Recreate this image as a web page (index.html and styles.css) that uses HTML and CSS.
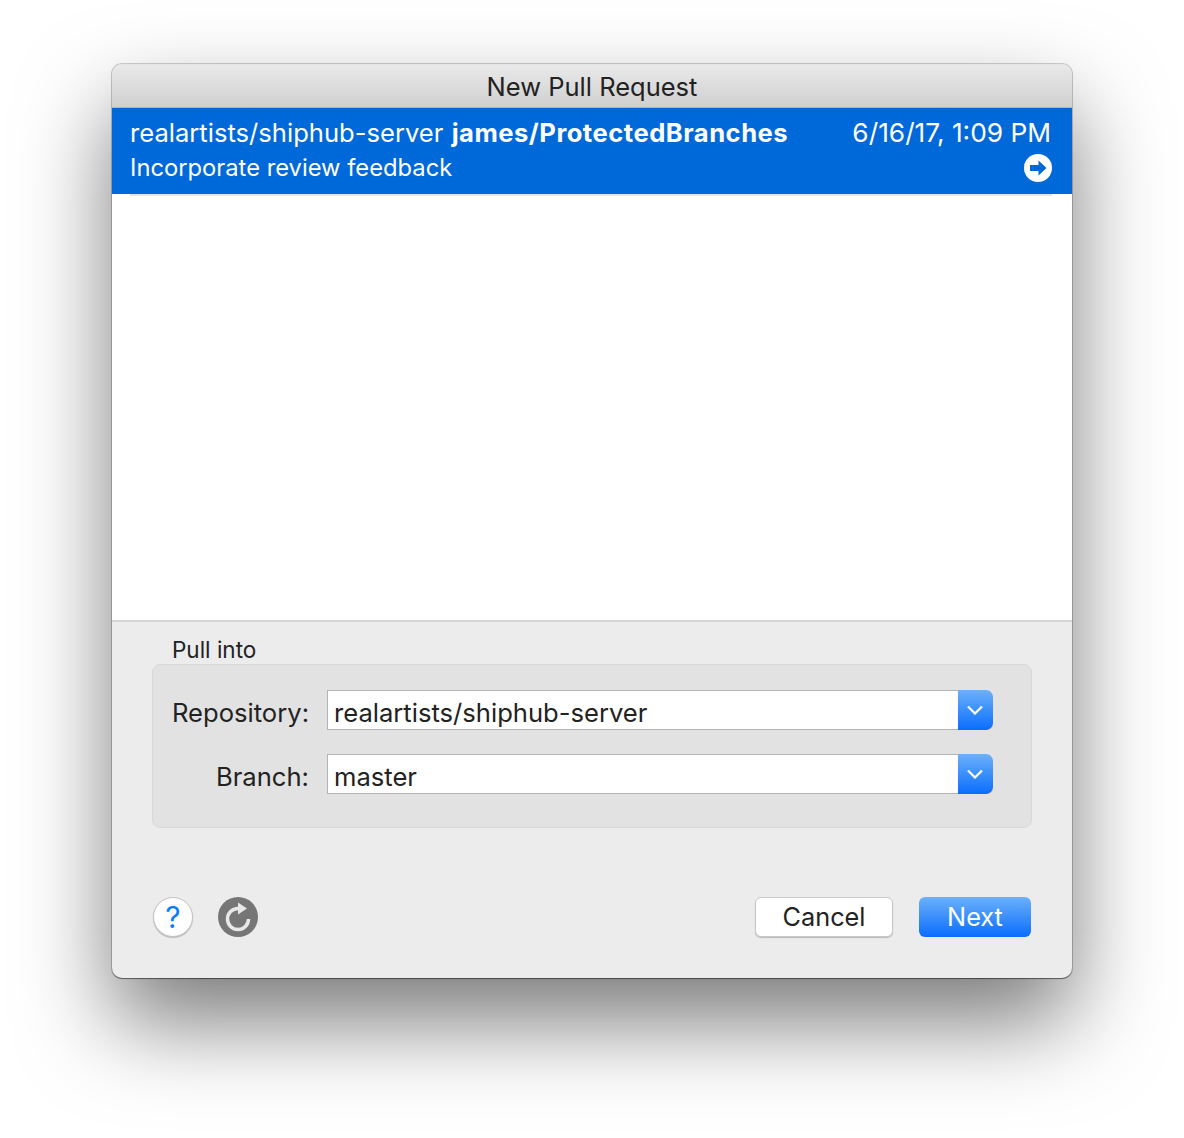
FILE: index.html
```html
<!DOCTYPE html>
<html lang="en">
<head>
  <meta charset="UTF-8" />
  <title>New Pull Request</title>
  <link rel="stylesheet" href="styles.css">
</head>
<body>
  <div class="window">
    <div class="titlebar">New Pull Request</div>

    <div class="list">
      <div class="row">
        <div class="row-line">
          <span>realartists/shiphub-server <strong>james/ProtectedBranches</strong></span>
          <span class="row-date">6/16/17, 1:09 PM</span>
        </div>
        <div class="row-line row-line-second">
          <span>Incorporate review feedback</span>
          <svg class="row-arrow" width="28" height="28" viewBox="0 0 28 28">
            <circle cx="14" cy="14" r="14" fill="#fff"/>
            <path d="M6 11h8.500V6.500L22.500 14l-8 7.500V17H6z" fill="#0069d9"/>
          </svg>
        </div>
      </div>
      <div class="row-rule"></div>
    </div>

    <div class="panel">
      <div class="group-title">Pull into</div>
      <div class="group">
        <div class="field">
          <label class="field-label">Repository:</label>
          <div class="combo">
            <div class="combo-value">realartists/shiphub-server</div>
            <div class="combo-btn">
              <svg width="16" height="10" viewBox="0 0 16 10"><path d="M1 1.500L8 8.500l7-7" fill="none" stroke="#fff" stroke-width="2.200"/></svg>
            </div>
          </div>
        </div>
        <div class="field">
          <label class="field-label">Branch:</label>
          <div class="combo">
            <div class="combo-value">master</div>
            <div class="combo-btn">
              <svg width="16" height="10" viewBox="0 0 16 10"><path d="M1 1.500L8 8.500l7-7" fill="none" stroke="#fff" stroke-width="2.200"/></svg>
            </div>
          </div>
        </div>
      </div>

      <div class="footer">
        <div class="help">?</div>
        <svg class="refresh" width="40" height="40" viewBox="0 0 40 40">
          <circle cx="20" cy="20" r="20" fill="#767676"/>
          <path d="M20 11.500A10.500 10.500 0 1 0 30.500 22" fill="none" stroke="#e8e8e8" stroke-width="3.500"/>
          <path d="M20 5.500L29 11.500 20 17.500z" fill="#e8e8e8"/>
        </svg>
        <div class="spacer"></div>
        <button class="btn">Cancel</button>
        <button class="btn btn-primary">Next</button>
      </div>
    </div>
  </div>
</body>
</html>
```

FILE: styles.css
```css
html, body {
  margin: 0;
  background: #fff;
}

body {
  font-family: Inter, "Noto Sans", sans-serif;
  color: #222;
  padding: 64px 112px 160px;
  height: 914px;
  overflow: hidden;
}

.window {
  display: flex;
  flex-direction: column;
  width: 960px;
  height: 914px;
  box-sizing: border-box;
  border-radius: 10px;
  overflow: hidden;
  background: #ececec;
  box-shadow: 0 0 0 1px rgba(0, 0, 0, .18), 0 1px 1px rgba(0, 0, 0, .4), 0 44px 90px rgba(0, 0, 0, .52);
}

.titlebar {
  height: 44px;
  flex: none;
  box-sizing: border-box;
  text-align: center;
  line-height: 44px;
  font-size: 25.500px;
  background: linear-gradient(#e9e9e9, #d0d0d0);
  border-top: 1px solid #e4e4e4;
  border-bottom: 1px solid #b4b4b4;
}

.list {
  height: 512px;
  flex: none;
  background: #fff;
}

.row {
  height: 86px;
  box-sizing: border-box;
  padding: 7px 21px 0 18px;
  background: #0069d9;
  color: #fff;
  font-size: 25.600px;
}

.row strong {
  margin-left: 1px;
  letter-spacing: .5px;
}

.row-date {
  font-size: 26.300px;
}

.row-line {
  display: flex;
  justify-content: space-between;
  align-items: center;
  height: 35px;
}

.row-line-second {
  font-size: 23.750px;
}

.row-arrow {
  margin-right: -1px;
}

.row-rule {
  height: 2px;
  margin: 0 20px 0 18px;
  background: #e4e4e4;
}

.panel {
  flex: 1;
  display: flex;
  flex-direction: column;
  border-top: 2px solid #d6d6d6;
  padding: 0 40px;
}

.group-title {
  font-size: 22.500px;
  margin: 14px 0 1px 20px;
  line-height: 27px;
}

.group {
  height: 164px;
  box-sizing: border-box;
  padding: 25px 38px 0 19px;
  background: #e2e2e2;
  border: 1px solid #d8d8d8;
  border-radius: 8px;
}

.field {
  display: flex;
  align-items: center;
  margin-bottom: 24px;
}

.field-label {
  width: 137px;
  margin-right: 18px;
  padding-top: 5px;
  text-align: right;
  font-size: 25.600px;
}

.combo {
  flex: 1;
  display: flex;
  height: 40px;
}

.combo-value {
  flex: 1;
  box-sizing: border-box;
  padding-left: 6px;
  line-height: 43px;
  font-size: 25.600px;
  background: #fff;
  border: 1px solid #b4b4b4;
  border-right: 0;
}

.combo-btn {
  display: flex;
  width: 35px;
  padding-right: 1px;
  box-sizing: border-box;
  align-items: center;
  justify-content: center;
  border-radius: 0 7px 7px 0;
  background: linear-gradient(#6cb1fb, #0a6dfd);
}

.footer {
  display: flex;
  align-items: center;
  margin-top: 69px;
  margin-right: 1px;
}

.help {
  width: 38px;
  height: 38px;
  margin-left: 1px;
  text-align: center;
  line-height: 38px;
  font-size: 30px;
  color: #0a7bfd;
  background: #fff;
  border: 1px solid #c4c4c4;
  border-radius: 50%;
  box-shadow: 0 1px 1px #bbb;
}

.refresh {
  margin-left: 25px;
}

.spacer {
  flex: 1;
}

.btn {
  width: 138px;
  height: 40px;
  padding: 0 0 2px;
  font-family: inherit;
  font-size: 25.300px;
  color: #222;
  background: #fff;
  border: 1px solid #c8c8c8;
  border-radius: 6px;
  box-shadow: 0 1px 1px #bbb;
}

.btn-primary {
  width: 112px;
  margin-left: 26px;
  color: #fff;
  border: 0;
  box-shadow: none;
  background: linear-gradient(#6cb1fb, #0a6dfd);
}
```
